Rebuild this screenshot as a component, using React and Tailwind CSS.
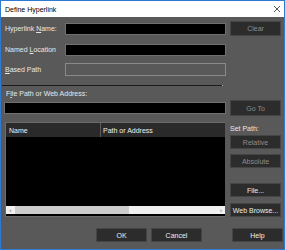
import React from "react";

const Btn = ({ children, disabled, className = "" }) => (
  <div
    className={`flex items-center justify-center w-[51px] bg-[#2c2c2c] border border-[#454545] text-[7px] ${
      disabled ? "text-[#8c8c8c]" : "text-[#ededed]"
    } ${className}`}
  >
    {children}
  </div>
);

const U = ({ children }) => <span className="underline underline-offset-1">{children}</span>;

export default function App() {
  return (
    <div className="w-[285px] h-[250px] border border-[#2f7ad1] bg-[#595959] flex flex-col overflow-hidden font-['Liberation_Sans',Arial,sans-serif] text-[7px] text-[#e8e8e8] leading-none">
      {/* title bar */}
      <div className="h-[16px] bg-white flex items-center justify-between pl-[4px] pr-[3px] text-black">
        <span>Define Hyperlink</span>
        <svg width="8" height="8" viewBox="0 0 8 8">
          <path d="M1 1L7 7M7 1L1 7" stroke="#444" strokeWidth="0.9" />
        </svg>
      </div>

      <div className="flex flex-col">
        <div className="flex items-center h-[15px] mt-[4px]">
          <div className="w-[64px] pl-[4px]">
            Hyperlink <U>N</U>ame:
          </div>
          <div className="w-[161px] h-[12px] bg-black border border-[#707070]" />
          <Btn disabled className="h-[15px] ml-[4px]">Clear</Btn>
        </div>

        <div className="flex items-center h-[15px] mt-[6px]">
          <div className="w-[64px] pl-[4px]">
            Named <U>L</U>ocation
          </div>
          <div className="w-[161px] h-[12px] bg-black border border-[#707070]" />
        </div>

        <div className="flex items-center h-[15px] mt-[5px]">
          <div className="w-[64px] pl-[4px]">
            <U>B</U>ased Path
          </div>
          <div className="w-[161px] h-[13px] border border-[#8a8a8a]" />
        </div>

        <div className="flex items-center mt-[8px] ml-[1px]">
          <div className="w-[220px] h-[1px] bg-[#1c1c1c]" />
          <div className="w-[1px] h-[1px] bg-[#b0b0b0]" />
        </div>

        <div className="h-[12px] mt-[1px] pl-[5px] flex items-center">
          F<U>i</U>le Path or Web Address:
        </div>

        <div className="flex items-center h-[16px] mt-[1px]">
          <div className="w-[222px] h-[12px] ml-[3px] bg-black border border-[#707070]" />
          <Btn disabled className="h-[16px] ml-[4px]">Go To</Btn>
        </div>

        <div className="flex mt-[6px]">
          <div className="w-[220px] h-[95px] ml-[4px] border-l border-t border-b border-[#6c6c6c] flex flex-col bg-black">
            <div className="h-[14px] bg-[#2a2a2a] flex items-center text-[#f0f0f0]">
              <div className="w-[94px] pl-[3px]">Name</div>
              <div className="w-[1px] h-[14px] bg-[#5c5c5c]" />
              <div className="pl-[2px]">Path or Address</div>
            </div>
            <div className="flex-1 bg-black" />
            <div className="h-[8px] bg-[#f0f0f0] flex items-center mb-[2px]">
              <span className="w-[9px] text-center text-[6px] text-[#555]">‹</span>
              <div className="w-[114px] h-[8px] bg-[#cdcdcd]" />
              <div className="flex-1" />
              <span className="w-[8px] text-center text-[6px] text-[#555]">›</span>
            </div>
          </div>
          <div className="flex flex-col ml-[5px]">
            <div className="h-[12px] flex items-center">Set Path:</div>
            <Btn disabled className="h-[14px] mt-[1px]">Relative</Btn>
            <Btn disabled className="h-[14px] mt-[5px]">Absolute</Btn>
            <Btn className="h-[14px] mt-[15px]">File...</Btn>
            <Btn className="h-[14px] mt-[6px]">Web Browse...</Btn>
          </div>
        </div>

        <div className="flex mt-[11px]">
          <Btn className="h-[14px] ml-[95px] w-[50px]">OK</Btn>
          <Btn className="h-[14px] ml-[4px] w-[50px]">Cancel</Btn>
          <Btn className="h-[14px] ml-[30px]">Help</Btn>
        </div>
      </div>
    </div>
  );
}
